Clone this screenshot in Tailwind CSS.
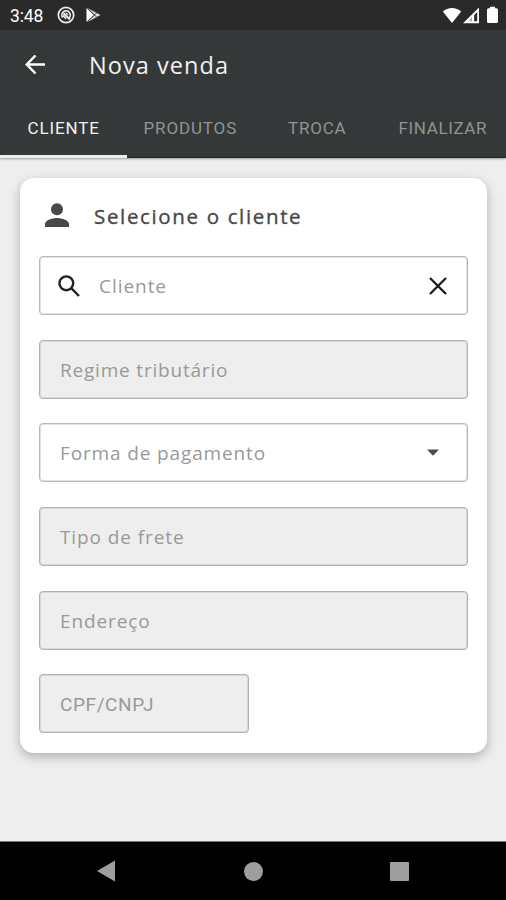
<!DOCTYPE html>
<html lang="pt-BR">
<head>
<meta charset="utf-8">
<meta name="viewport" content="width=device-width, initial-scale=1">
<title>Nova venda</title>
<script src="https://cdn.jsdelivr.net/npm/@tailwindcss/browser@4"></script>
</head>
<body class="w-[506px] h-[900px] overflow-hidden flex flex-col bg-[#eeeeee] font-['Open_Sans',sans-serif]">
  <!-- Status bar -->
  <div class="h-[30px] shrink-0 bg-[#292a29] flex items-center px-[10px] text-white">
    <span class="font-['Roboto',sans-serif] text-[17.5px] leading-5 w-[47px] pt-px tracking-[-0.1px] whitespace-nowrap">3:48</span>
    <svg class="w-[18px] h-[18px]" viewBox="0 0 18 18" fill="none" stroke="#eee">
      <circle cx="9" cy="9" r="7.7" stroke-width="1.7"/>
      <path d="M5.600 11.500a4.200 4.200 0 1 1 6.200 0.800" stroke-width="1.700"/>
      <path d="M6.500 7.500L13 13.500" stroke-width="2"/><path d="M6 9.500l3 3.300" stroke-width="1.600"/><path d="M8.500 6.800l2.700 2.200" stroke-width="1.200"/>
    </svg>
    <svg class="w-[15px] h-[16px] ml-[11px]" viewBox="0 0 15 16"><path d="M.5 1v14L8 8z" fill="#fff"/><path d="M1.5 1L14.5 8l-13 7L9 8z" fill="#ddd"/><path d="M2 2l9 8.4M2 14l9-8.4" stroke="#444" stroke-width=".9" fill="none"/></svg>
    <div class="ml-auto flex items-center mr-[-3px]">
      <svg class="w-[20px] h-[17px]" viewBox="0 0 20 17"><path d="M.8 4.5C6-.2 14-.2 19.200 4.500L10 16z" fill="#fff"/></svg>
      <svg class="w-[17px] h-[17px] ml-px" viewBox="0 0 17 17"><path fill-rule="evenodd" d="M0 16.300L16 .600v15.700zM11.200 8v6.300h3V4.900z" fill="#fff"/><path d="M9 10v4.300H6.500v-1.500z" fill="#aaa"/></svg>
      <svg class="w-[12px] h-[18px] ml-[7px]" viewBox="0 0 12 18"><path d="M3 .7h5v1.600h1.500a1.500 1.500 0 011.500 1.500V15.500a1.500 1.500 0 01-1.500 1.500h-8A1.500 1.500 0 010 15.500V3.800a1.500 1.500 0 011.500-1.500H3z" fill="#fff"/></svg>
    </div>
  </div>
  <!-- App bar and tabs -->
  <header class="h-[128px] shrink-0 bg-[#343838] shadow-[0_1px_2px_rgba(0,0,0,0.35)] flex flex-col z-10">
    <div class="h-[70px] flex items-center pl-[25px]">
      <svg class="w-[21px] h-[20px]" viewBox="0 0 21 20" fill="none" stroke="#fff" stroke-width="2.500"><path d="M20 9.500H2M10.500 .5L1.800 9.500l8.700 9"/></svg>
      <h1 class="ml-[43px] text-[23.5px] leading-8 tracking-[1.05px] text-[#f2f2f2] whitespace-nowrap">Nova venda</h1>
    </div>
    <nav class="flex-1 flex font-['Roboto',sans-serif] text-[17px] leading-6 text-[#929494] whitespace-nowrap">
      <div class="w-[127px] pt-[16px] pl-[27.500px] text-[#f2f2f2] border-b-3 border-[#eeeeee] tracking-[0.85px]">CLIENTE</div>
      <div class="w-[127px] pt-[16px] pl-[16.500px] border-b border-[#222525] tracking-[0.85px]">PRODUTOS</div>
      <div class="w-[127px] pt-[16px] pl-[34px] border-b border-[#222525] tracking-[0.8px]">TROCA</div>
      <div class="w-[125px] pt-[16px] pl-[17.500px] border-b border-[#222525] tracking-[0.63px]">FINALIZAR</div>
    </nav>
  </header>
  <!-- Form -->
  <main class="flex-1 pt-[20px] pl-[20px] pr-[19px]">
    <section class="h-[575px] rounded-[14px] bg-white shadow-[0_4px_11px_rgba(0,0,0,0.26)] pl-[19px] pr-[19px] flex flex-col">
      <div class="h-[78px] shrink-0 flex items-center pl-[6px]">
        <svg class="w-[24px] h-[24px] mb-[5px]" viewBox="0 0 24 24" fill="#484848"><circle cx="12" cy="6.200" r="6"/><path d="M0 24v-3c0-4 8-6 12-6s12 2 12 6v3z"/></svg>
        <h2 class="ml-[25px] mb-[2px] text-[20.5px] leading-7 font-medium tracking-[1.65px] [-webkit-text-stroke:0.35px_#484848] text-[#484848] whitespace-nowrap">Selecione o cliente</h2>
      </div>
      <div class="flex flex-col gap-[24.700px] text-[19px] leading-7 tracking-[0.8px] text-[#999] whitespace-nowrap">
        <div class="h-[59px] rounded-[4px] border border-[#b8b8b8] shadow-[inset_0_0_0_1px_#e2e2e2] flex items-center pl-[18px] pr-[20px]">
          <svg class="w-[22px] h-[22px]" viewBox="0 0 22 22" fill="none" stroke="#222" stroke-width="2.400"><circle cx="8.300" cy="8.300" r="6.900"/><path d="M13.200 13.200l7.800 7.800"/></svg>
          <span class="ml-[19px] tracking-[0.95px]">Cliente</span>
          <svg class="w-[18px] h-[18px] ml-auto" viewBox="0 0 18 18" stroke="#1c1c1c" stroke-width="2.300"><path d="M1 1l16 16M17 1L1 17"/></svg>
        </div>
        <div class="h-[59px] rounded-[4px] border border-[#b0b0b0] shadow-[inset_0_0_0_1px_#dadada] bg-[#eeeeee] flex items-center pl-[20px] pt-px">Regime tributário</div>
        <div class="h-[59px] rounded-[4px] border border-[#b8b8b8] shadow-[inset_0_0_0_1px_#e2e2e2] flex items-center justify-between pl-[20px] pr-[28px]">
          <span class="tracking-[0.86px]">Forma de pagamento</span>
          <svg class="w-[12px] h-[7px]" viewBox="0 0 12 7"><path d="M0 .5h12L6 6.700z" fill="#4c4c4c"/></svg>
        </div>
        <div class="h-[59px] rounded-[4px] border border-[#b0b0b0] shadow-[inset_0_0_0_1px_#dadada] bg-[#eeeeee] flex items-center pl-[20px] tracking-[0.9px]">Tipo de frete</div>
        <div class="h-[59px] rounded-[4px] border border-[#b0b0b0] shadow-[inset_0_0_0_1px_#dadada] bg-[#eeeeee] flex items-center pl-[20px] pt-px tracking-[0.9px]">Endereço</div>
        <div class="w-[210px] h-[59px] rounded-[4px] border border-[#b0b0b0] shadow-[inset_0_0_0_1px_#dadada] bg-[#eeeeee] flex items-center pl-[20px] pt-[2px] font-['Roboto',sans-serif] tracking-[0.6px]">CPF/CNPJ</div>
      </div>
    </section>
  </main>
  <!-- System navigation -->
  <footer class="h-[59px] shrink-0 bg-black border-t border-[#777] flex items-center pl-[97px] text-[#9e9e9e]">
    <svg class="w-[18px] h-[22px]" viewBox="0 0 18 22"><path d="M0 11L18 .5v21z" fill="currentColor"/></svg>
    <div class="w-[19px] h-[19px] rounded-full bg-[#9e9e9e] ml-[129px]"></div>
    <div class="w-[19px] h-[19px] rounded-[1px] bg-[#9e9e9e] ml-[127px]"></div>
  </footer>
</body>
</html>
